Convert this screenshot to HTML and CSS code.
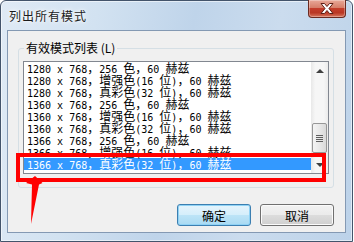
FILE: index.html
```html
<!DOCTYPE html>
<html lang="zh-CN">
<head>
    <meta charset="UTF-8">
    <meta name="viewport" content="width=device-width, initial-scale=1.0">
    <title>列出所有模式</title>
    <link rel="stylesheet" href="styles.css">
</head>
<body>
    <div class="window">
        <div class="titlebar">
            <span class="title">列出所有模式</span>
            <span class="close">
                <svg width="14" height="11" viewBox="0 0 14 11">
                    <polygon points="1,0.5 4.5,0.5 7,3.5 9.5,0.5 13,0.5 9,5.5 13,10.5 9.5,10.5 7,7.5 4.5,10.5 1,10.5 5,5.5" fill="#fff" stroke="#5e1f15" stroke-width="1"/>
                </svg>
            </span>
        </div>
        <div class="client">
            <fieldset class="group">
                <legend>有效模式列表 (L)</legend>
                <div class="listbox">
                    <ul class="modes">
                        <li>1280 x 768<span class="h">，</span>256 <span class="h">色，</span>60 <span class="h">赫兹</span></li>
                        <li>1280 x 768<span class="h">，增强色</span>(16 <span class="h">位</span>)<span class="h">，</span>60 <span class="h">赫兹</span></li>
                        <li>1280 x 768<span class="h">，真彩色</span>(32 <span class="h">位</span>)<span class="h">，</span>60 <span class="h">赫兹</span></li>
                        <li>1360 x 768<span class="h">，</span>256 <span class="h">色，</span>60 <span class="h">赫兹</span></li>
                        <li>1360 x 768<span class="h">，增强色</span>(16 <span class="h">位</span>)<span class="h">，</span>60 <span class="h">赫兹</span></li>
                        <li>1360 x 768<span class="h">，真彩色</span>(32 <span class="h">位</span>)<span class="h">，</span>60 <span class="h">赫兹</span></li>
                        <li>1366 x 768<span class="h">，</span>256 <span class="h">色，</span>60 <span class="h">赫兹</span></li>
                        <li>1366 x 768<span class="h">，增强色</span>(16 <span class="h">位</span>)<span class="h">，</span>60 <span class="h">赫兹</span></li>
                        <li class="sel">1366 x 768<span class="h">，真彩色</span>(32 <span class="h">位</span>)<span class="h">，</span>60 <span class="h">赫兹</span></li>
                    </ul>
                    <div class="scrollbar">
                        <span class="arrow up"></span>
                        <span class="track"><span class="thumb"></span></span>
                        <span class="arrow down"></span>
                    </div>
                </div>
            </fieldset>
            <div class="buttons">
                <button class="btn default">确定</button>
                <button class="btn">取消</button>
            </div>
        </div>
    </div>

    <!-- annotation drawn over the screenshot -->
    <div class="mark"></div>
    <svg class="pointer" viewBox="0 0 20 52">
        <polygon points="11,2 18.5,9 15,10.5 7,50 8,10.5 2,9" fill="#ff0000"/>
    </svg>
</body>
</html>
```

FILE: styles.css
```css
body {
    margin: 0;
    background-color: #fff;
    position: relative;
    font-family: "Noto Sans CJK SC", sans-serif;
    font-size: 12px;
}
.window {
    box-sizing: border-box;
    width: 353px;
    height: 242px;
    border: 1px solid #43546b;
    border-radius: 6px 6px 0 0;
    padding: 0 6px 8px 6px;
    display: flex;
    flex-direction: column;
    background: linear-gradient(100deg, #dfeaf5 0%, #d2e2f1 25%, #bfd4ea 50%, #cbdcee 72%, #bcd2e9 100%);
    box-shadow: inset 0 0 0 1px rgba(255, 255, 255, 0.55);
}
.titlebar {
    height: 29px;
    display: flex;
    align-items: flex-start;
}
.title {
    margin: 8px 0 0 2px;
    line-height: 14px;
    letter-spacing: 1px;
    color: #1b1b1b;
    text-shadow: 0 0 6px #fff, 0 0 3px #fff;
}
.close {
    margin: -1px 0 0 auto;
    width: 38px;
    height: 18px;
    box-sizing: border-box;
    border: 1px solid #6b2a20;
    border-top: none;
    border-radius: 0 0 4px 4px;
    background: linear-gradient(#e9a898, #d67e69 45%, #c43d2a 50%, #b93724 75%, #d8775e);
    box-shadow: inset 0 0 0 1px rgba(255, 255, 255, 0.3);
    display: flex;
    align-items: center;
    justify-content: center;
}
.client {
    flex: 1;
    border: 1px solid #8499b3;
    background-color: #f0f0f0;
    padding: 10px 0 0 10px;
}
.group {
    margin: 0;
    width: 316px;
    box-sizing: border-box;
    border: 1px solid #d5dfe5;
    border-radius: 3px;
    padding: 6px 4px 13px;
}
.group legend {
    padding: 0 2px;
    margin-left: 1px;
    line-height: 14px;
    color: #000;
}
.listbox {
    display: flex;
    height: 113px;
    box-sizing: border-box;
    border: 1px solid #828790;
    background-color: #fff;
}
.modes {
    list-style: none;
    margin: 0;
    padding: 0;
    flex: 1;
    font-family: "DejaVu Sans Mono", monospace;
    font-size: 10px;
    color: #000;
}
.modes li {
    height: 12px;
    line-height: 12px;
    padding-left: 3px;
    white-space: nowrap;
}
.modes .sel {
    background-color: #3399ff;
    color: #fff;
}
.h {
    font-family: "Noto Sans CJK SC", sans-serif;
    font-size: 12px;
    line-height: 12px;
}
.scrollbar {
    width: 17px;
    display: flex;
    flex-direction: column;
    background: linear-gradient(90deg, #e8e8e8, #f6f6f6 25%, #f6f6f6 75%, #ebebeb);
}
.arrow {
    height: 17px;
    display: flex;
    align-items: center;
    justify-content: center;
}
.arrow::before {
    content: "";
    border-left: 4px solid transparent;
    border-right: 4px solid transparent;
}
.up::before {
    border-bottom: 4px solid #404040;
}
.down::before {
    border-top: 4px solid #404040;
}
.track {
    flex: 1;
    display: flex;
    flex-direction: column;
    justify-content: flex-end;
    padding: 0 1px 3px;
}
.thumb {
    height: 30px;
    box-sizing: border-box;
    border: 1px solid #979797;
    border-radius: 2px;
    background: linear-gradient(90deg, #f4f4f4, #e8e8e8 50%, #d9d9d9);
    display: flex;
    align-items: center;
    justify-content: center;
}
.thumb::before {
    content: "";
    width: 7px;
    height: 7px;
    background: repeating-linear-gradient(#5f5f5f 0 1px, transparent 1px 2px);
}
.buttons {
    width: 316px;
    margin-top: 16px;
    display: flex;
    justify-content: flex-end;
    gap: 9px;
}
.btn {
    width: 74px;
    height: 22px;
    padding: 0;
    border: 1px solid #707070;
    border-radius: 3px;
    background: linear-gradient(#f2f2f2 0%, #ebebeb 50%, #dddddd 50%, #cfcfcf 100%);
    box-shadow: inset 0 0 0 1px #fbfbfb;
    font-family: "Noto Sans CJK SC", sans-serif;
    font-size: 12px;
    color: #000;
}
.btn.default {
    border-color: #3c7fb1;
    background: linear-gradient(#e5f4fc 0%, #d5eefb 50%, #bde4f7 50%, #a9daf3 100%);
    box-shadow: inset 0 0 0 1px #8fd2f5;
}
.mark {
    position: absolute;
    left: 16px;
    top: 153px;
    width: 310px;
    height: 29px;
    box-sizing: border-box;
    border: 4px solid #ff0000;
}
.pointer {
    position: absolute;
    left: 24px;
    top: 174px;
    width: 20px;
    height: 52px;
}
```
